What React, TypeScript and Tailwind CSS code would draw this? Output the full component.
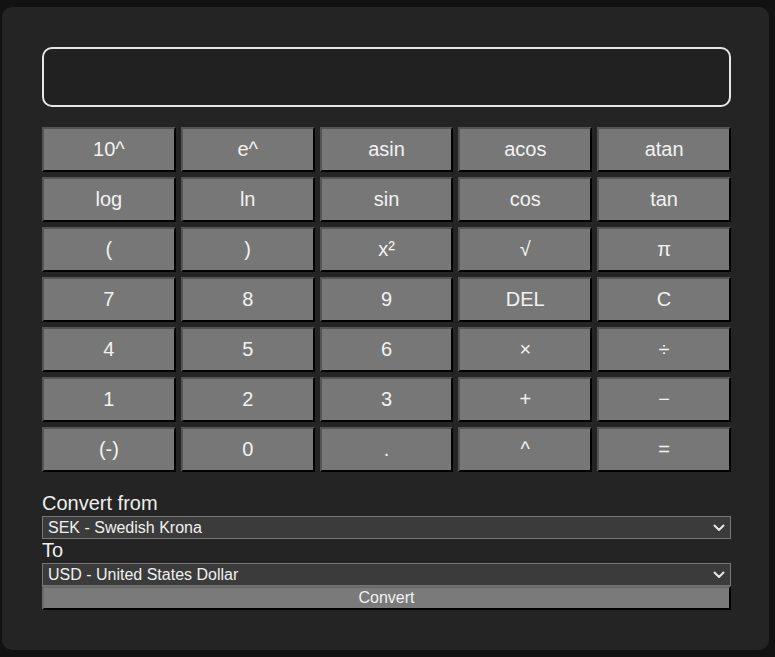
const KEYS = [
  "10^", "e^", "asin", "acos", "atan",
  "log", "ln", "sin", "cos", "tan",
  "(", ")", "x²", "√", "π",
  "7", "8", "9", "DEL", "C",
  "4", "5", "6", "×", "÷",
  "1", "2", "3", "+", "−",
  "(-)", "0", ".", "^", "=",
];

function Chevron() {
  return (
    <svg width="12" height="8" viewBox="0 0 12 8" fill="none" className="pointer-events-none absolute right-[6px] top-[8px] text-[#e8e8e8]">
      <path d="M1.5 1.5 6 6l4.5-4.5" stroke="currentColor" strokeWidth="2" strokeLinecap="round" strokeLinejoin="round" />
    </svg>
  );
}

function Select({ value }: { value: string }) {
  return (
    <div className="relative">
      <select
        defaultValue={value}
        className="block h-[23px] w-full appearance-none border border-[#767676] bg-[#3b3b3b] px-[5px] text-[16px] leading-[21px] text-[#f0f0f0] outline-none"
      >
        <option>{value}</option>
      </select>
      <Chevron />
    </div>
  );
}

export default function App() {
  return (
    <div className="h-[657px] w-full overflow-hidden bg-[#121212] pl-[2px] pt-[7px] font-['Liberation_Sans',Arial,sans-serif]">
      <div className="h-[643px] w-[767px] rounded-[10px] bg-[#242424] p-[40px] pr-[38px]">
        <div className="h-[60px] rounded-[10px] border-2 border-[#e6e6e6] bg-[#212121]" />

        <div className="mt-[20px] grid grid-cols-5 gap-[5px]">
          {KEYS.map((k) => (
            <button
              key={k}
              className="flex h-[45px] items-center justify-center border-2 border-b-black border-l-[#555] border-r-black border-t-[#555] bg-[#777] pb-[2px] text-[20px] text-[#f2f2f2]"
            >
              {k}
            </button>
          ))}
        </div>

        <div className="mt-[20px] text-[20px] leading-[22px] text-[#eeeeee]">Convert from</div>
        <div className="h-[2px]" />
        <Select value="SEK - Swedish Krona" />
        <div className="text-[20px] leading-[22px] text-[#eeeeee]">To</div>
        <div className="h-[2px]" />
        <Select value="USD - United States Dollar" />
        <button className="block h-[24px] w-full border-2 border-b-black border-l-[#6a6a6a] border-r-black border-t-[#6a6a6a] bg-[#7a7a7a] text-[16px] leading-[18px] text-[#f2f2f2]">
          Convert
        </button>
      </div>
    </div>
  );
}
